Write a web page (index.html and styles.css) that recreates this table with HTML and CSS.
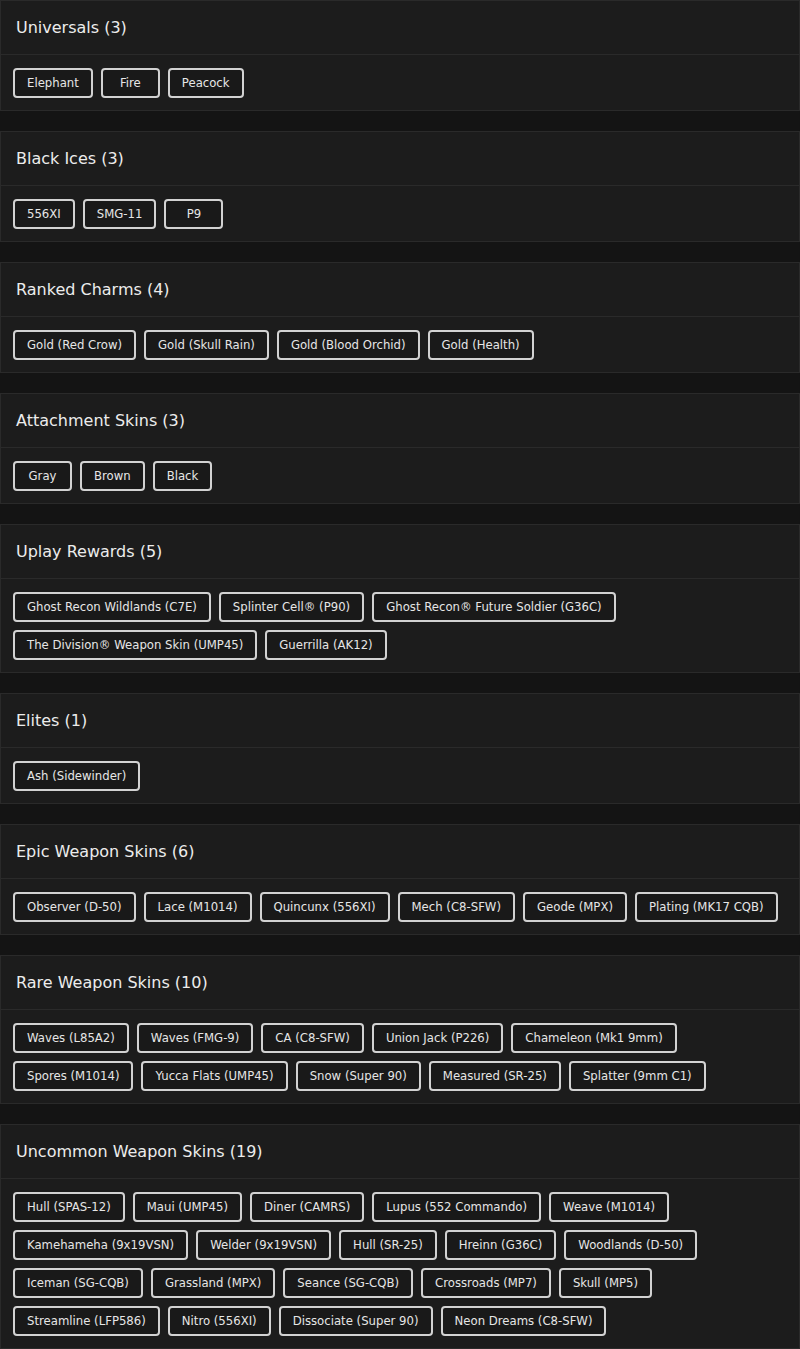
FILE: index.html
```html
<!DOCTYPE html>
<html lang="en">
<head>
<meta charset="utf-8">
<title>Items</title>
<link rel="stylesheet" href="styles.css">
</head>
<body>
<main class="list">
  <section class="card">
    <h2 class="card-header">Universals (3)</h2>
    <div class="card-body">
      <span class="tag">Elephant</span><span class="tag">Fire</span><span class="tag">Peacock</span>
    </div>
  </section>
  <section class="card">
    <h2 class="card-header">Black Ices (3)</h2>
    <div class="card-body">
      <span class="tag">556XI</span><span class="tag">SMG-11</span><span class="tag">P9</span>
    </div>
  </section>
  <section class="card">
    <h2 class="card-header">Ranked Charms (4)</h2>
    <div class="card-body">
      <span class="tag">Gold (Red Crow)</span><span class="tag">Gold (Skull Rain)</span><span class="tag">Gold (Blood Orchid)</span><span class="tag">Gold (Health)</span>
    </div>
  </section>
  <section class="card">
    <h2 class="card-header">Attachment Skins (3)</h2>
    <div class="card-body">
      <span class="tag">Gray</span><span class="tag">Brown</span><span class="tag">Black</span>
    </div>
  </section>
  <section class="card">
    <h2 class="card-header">Uplay Rewards (5)</h2>
    <div class="card-body">
      <span class="tag">Ghost Recon Wildlands (C7E)</span><span class="tag">Splinter Cell® (P90)</span><span class="tag">Ghost Recon® Future Soldier (G36C)</span><span class="tag">The Division® Weapon Skin (UMP45)</span><span class="tag">Guerrilla (AK12)</span>
    </div>
  </section>
  <section class="card">
    <h2 class="card-header">Elites (1)</h2>
    <div class="card-body">
      <span class="tag">Ash (Sidewinder)</span>
    </div>
  </section>
  <section class="card">
    <h2 class="card-header">Epic Weapon Skins (6)</h2>
    <div class="card-body">
      <span class="tag">Observer (D-50)</span><span class="tag">Lace (M1014)</span><span class="tag">Quincunx (556XI)</span><span class="tag">Mech (C8-SFW)</span><span class="tag">Geode (MPX)</span><span class="tag">Plating (MK17 CQB)</span>
    </div>
  </section>
  <section class="card">
    <h2 class="card-header">Rare Weapon Skins (10)</h2>
    <div class="card-body">
      <span class="tag">Waves (L85A2)</span><span class="tag">Waves (FMG-9)</span><span class="tag">CA (C8-SFW)</span><span class="tag">Union Jack (P226)</span><span class="tag">Chameleon (Mk1 9mm)</span><span class="tag">Spores (M1014)</span><span class="tag">Yucca Flats (UMP45)</span><span class="tag">Snow (Super 90)</span><span class="tag">Measured (SR-25)</span><span class="tag">Splatter (9mm C1)</span>
    </div>
  </section>
  <section class="card">
    <h2 class="card-header">Uncommon Weapon Skins (19)</h2>
    <div class="card-body">
      <span class="tag">Hull (SPAS-12)</span><span class="tag">Maui (UMP45)</span><span class="tag">Diner (CAMRS)</span><span class="tag">Lupus (552 Commando)</span><span class="tag">Weave (M1014)</span><span class="tag">Kamehameha (9x19VSN)</span><span class="tag">Welder (9x19VSN)</span><span class="tag">Hull (SR-25)</span><span class="tag">Hreinn (G36C)</span><span class="tag">Woodlands (D-50)</span><span class="tag">Iceman (SG-CQB)</span><span class="tag">Grassland (MPX)</span><span class="tag">Seance (SG-CQB)</span><span class="tag">Crossroads (MP7)</span><span class="tag">Skull (MP5)</span><span class="tag">Streamline (LFP586)</span><span class="tag">Nitro (556XI)</span><span class="tag">Dissociate (Super 90)</span><span class="tag">Neon Dreams (C8-SFW)</span>
    </div>
  </section>
</main>
</body>
</html>
```

FILE: styles.css
```css
* { box-sizing: border-box; }

html, body {
  margin: 0;
  padding: 0;
  background: #141414;
}

body {
  font-family: "DejaVu Sans", "Open Sans", sans-serif;
  color: #e4e4e4;
}

.list {
  display: flex;
  flex-direction: column;
  gap: 20px;
}

.card {
  background: #1c1c1c;
  border: 1px solid #2a2a2a;
}

.card-header {
  margin: 0;
  height: 54px;
  padding: 0 15px;
  display: flex;
  align-items: center;
  font-size: 16px;
  font-weight: 500;
  color: #ececec;
  border-bottom: 1px solid #2a2a2a;
}

.card-body {
  display: flex;
  flex-wrap: wrap;
  gap: 8px;
  padding: 13px 12px 12px;
}

.tag {
  display: inline-flex;
  align-items: center;
  justify-content: center;
  min-width: 59px;
  height: 30px;
  padding: 0 12px;
  border: 2px solid #d2d2d2;
  border-radius: 4px;
  background: #191919;
  color: #e6e6e6;
  font-size: 11.7px;
  white-space: nowrap;
}
```
